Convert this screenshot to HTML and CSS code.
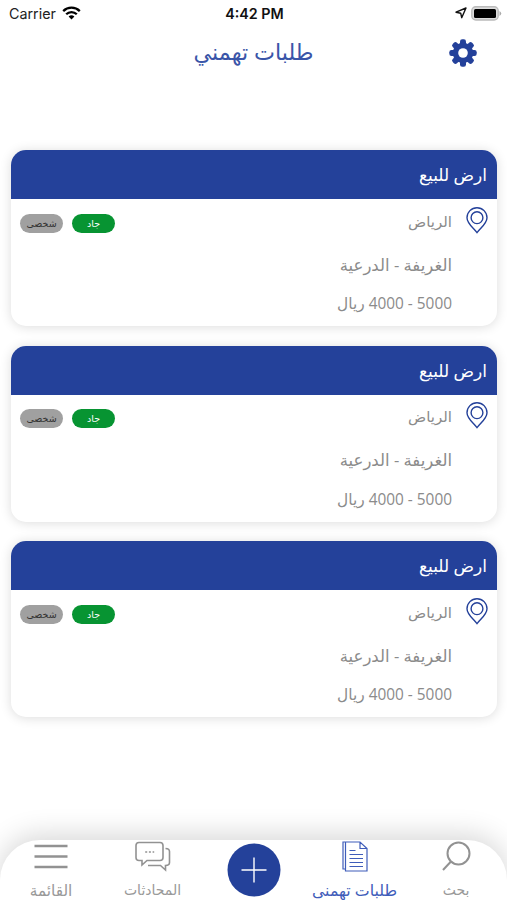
FILE: index.html
```html
<!DOCTYPE html>
<html lang="ar" dir="rtl">
<head>
<meta charset="utf-8">
<title>طلبات تهمني</title>
<link rel="stylesheet" href="styles.css">
</head>
<body>
<svg class="defs" width="0" height="0" aria-hidden="true">
  <symbol id="pin" viewBox="0 0 22 27"><path d="M11 25.700C7.500 21 1 16.500 1 10.700a10 10 0 0 1 20 0C21 16.500 14.500 21 11 25.700Z"/><circle cx="11" cy="10.700" r="5.900"/></symbol>
</svg>
<div class="screen">
  <div class="status" dir="ltr">
    <div class="carrier"><span>Carrier</span>
      <svg width="19" height="14" viewBox="0 0 19 14"><g fill="none" stroke="#000" stroke-width="2.300"><path d="M1.200 5.100a11.800 11.800 0 0 1 16.600 0"/><path d="M4.200 8.300a7.500 7.500 0 0 1 10.600 0"/></g><path d="M6.600 10.600a4.100 4.100 0 0 1 5.800 0L9.500 13.500Z"/></svg>
    </div>
    <div class="clock">4:42 PM</div>
    <div class="power">
      <svg width="12" height="12" viewBox="0 0 12 12"><path d="M1 5.200 11 1 6.700 10.700 5.700 6.200Z" fill="none" stroke="#111" stroke-width="1.400" stroke-linejoin="round"/></svg>
      <svg width="31" height="15" viewBox="0 0 31 15"><rect x=".8" y=".8" width="26.400" height="13.200" rx="4" fill="#ddd" stroke="#bbb" stroke-width="1.400"/><rect x="3" y="3" width="22" height="9" rx="1.500"/><path d="M28.500 5q3.500 2.500 0 5Z" fill="#aaa"/></svg>
    </div>
  </div>
  <header class="top">
    <svg class="gear" width="28" height="28" viewBox="-14 -14 28 28"><g fill="#24419a"><g id="teeth"><rect x="-3" y="-13.700" width="6" height="27.400" rx="2.200"/><rect x="-13.700" y="-3" width="27.400" height="6" rx="2.200"/></g><use href="#teeth" transform="rotate(45)"/><circle r="10.200"/></g><circle r="4.800" fill="#fff"/></svg>
    <h1>طلبات تهمني</h1>
  </header>
  <main class="list">
    <article class="card">
      <h2>ارض للبيع</h2>
      <div class="body">
        <svg class="pin"><use href="#pin"/></svg>
        <div class="lines"><p class="city">الرياض</p><p class="area">الغريفة - الدرعية</p><p class="price">5000 - 4000 ريال</p></div>
        <div class="tags"><span class="tag green">جاد</span><span class="tag gray">شخصى</span></div>
      </div>
    </article>
    <article class="card">
      <h2>ارض للبيع</h2>
      <div class="body">
        <svg class="pin"><use href="#pin"/></svg>
        <div class="lines"><p class="city">الرياض</p><p class="area">الغريفة - الدرعية</p><p class="price">5000 - 4000 ريال</p></div>
        <div class="tags"><span class="tag green">جاد</span><span class="tag gray">شخصى</span></div>
      </div>
    </article>
    <article class="card">
      <h2>ارض للبيع</h2>
      <div class="body">
        <svg class="pin"><use href="#pin"/></svg>
        <div class="lines"><p class="city">الرياض</p><p class="area">الغريفة - الدرعية</p><p class="price">5000 - 4000 ريال</p></div>
        <div class="tags"><span class="tag green">جاد</span><span class="tag gray">شخصى</span></div>
      </div>
    </article>
  </main>
  <nav class="tabs">
    <a class="tab"><svg width="30" height="32" viewBox="0 0 30 32"><circle cx="17.500" cy="13.500" r="11"/><path d="M10 21.500 2 30"/></svg><span>بحث</span></a>
    <a class="tab active"><svg width="26" height="32" viewBox="0 0 26 32"><g stroke-width="1.200"><path d="M3.500 2H1v27h2.500M3.500 2v29H25V8.500L18 2ZM18 2v6.500h7M7.500 10.500h6M7.500 14.500h13.500M7.500 18.500h13.500M7.500 22.500h13.500M7.500 26.500h13.500"/></g></svg><span>طلبات تهمنى</span></a>
    <a class="add"><svg width="54" height="54" viewBox="0 0 54 54"><circle cx="27" cy="27" r="26.500" fill="#24419a"/><path d="M27 14.500v25M14.500 27h25" stroke="#fff" stroke-width="1.400"/></svg></a>
    <a class="tab chats"><svg width="36" height="32" viewBox="0 0 36 32"><g stroke-width="1.600"><path d="M4 2.500h21q3 0 3 3v12q0 3-3 3H12L7 25v-4.500H4q-3 0-3-3v-12q0-3 3-3Z"/><path d="M30.500 8.500q4 0 4 3v11q0 3-4 3V30l-5-4.500H13"/></g><path d="M10.200 12h9" stroke-dasharray="2 1.700" stroke-width="1.700"/></svg><span>المحادثات</span></a>
    <a class="tab menu"><svg width="34" height="32" viewBox="0 0 34 32"><path d="M.5 6h33M.5 16.500h33M.5 27h33" stroke-width="2.500"/></svg><span>القائمة</span></a>
  </nav>
</div>
</body>
</html>
```
FILE: styles.css
```css
*{box-sizing:border-box}
body{margin:0;background:#fff;font-family:"Open Sans","DejaVu Sans",sans-serif;overflow:hidden}
h1,h2,p{margin:0;font-weight:400}
.defs{display:block;height:0}
.screen{height:900px;display:flex;flex-direction:column;overflow:hidden}
.status{height:26px;display:grid;grid-template-columns:1fr auto 1fr;align-items:center;padding:0 7px 0 9px;font-family:Inter,sans-serif;font-size:14.300px;color:#222}
.carrier{display:flex;align-items:center;gap:6px}
.clock{font-weight:600;color:#111}
.power{display:flex;align-items:center;justify-content:flex-end;gap:4px}
.power svg:last-child{margin-right:-2px}
.top{height:124px;display:grid;grid-template-columns:28px 1fr 28px;padding:13px 30px 0}
.top h1{text-align:center;font-size:22.300px;line-height:26px;color:#3a55a8}
.list{display:flex;flex-direction:column;gap:19.500px;padding:0 10px 0 11px}
.card{height:176px;border-radius:15px;background:#fff;box-shadow:0 1px 12px #00000024;overflow:hidden}
.card h2{height:49px;line-height:50px;padding-right:10px;background:#24419a;color:#fff;font-size:17px}
.body{display:flex;align-items:flex-start;padding:7.500px 9px 0 9px}
.pin{width:22px;height:27px;fill:none;stroke:#24419a;stroke-width:1.400}
.lines{flex:1;padding-right:14px;color:#8b8b8b;font-size:15.400px}
.lines p{height:39.500px;line-height:28px}
.lines .city{height:44px;font-size:15px}
.lines .area{font-size:16.500px}
.tags{display:flex;gap:9px;padding-top:7px}
.tag{width:43px;height:19px;border-radius:10px;text-align:center;line-height:19px;font-size:9.500px}
.green{background:#079432;color:#fff}
.gray{background:#a0a0a0;color:#333}
.tabs{height:60px;margin-top:auto;display:grid;grid-template-columns:102px 101px 101px 101px 102px;border-radius:40px 40px 0 0;background:#fff;box-shadow:0 -5px 28px #00000029}
.tab{display:flex;flex-direction:column;align-items:center;color:#999;white-space:nowrap;font-size:14px}
.tab svg{fill:none;stroke:#929292;stroke-width:2}
.tab span{line-height:24px;margin-top:6px}
.tab.active{color:#3f5dba;font-size:15.800px}
.tab.active svg{stroke:#3f5dba}
.tab.menu{font-size:15.300px}
.add{display:flex;justify-content:center;padding-top:3px}
```
